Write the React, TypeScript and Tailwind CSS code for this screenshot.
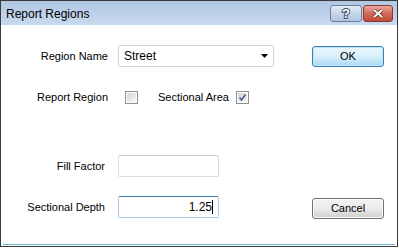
import React from 'react';

function Checkbox({ checked }: { checked?: boolean }) {
  return (
    <div className="w-[13px] h-[13px] border border-[#8f8f8f] bg-white p-[1px]">
      <div className="w-full h-full bg-gradient-to-br from-[#d6d6d6] to-[#f7f7f7] relative">
        {checked && (
          <svg className="absolute inset-0" width="9" height="9" viewBox="0 0 9 9">
            <path d="M1.5 4.5 L3.5 7 L7.5 1.5" stroke="#4a5c92" strokeWidth="1.6" fill="none" />
          </svg>
        )}
      </div>
    </div>
  );
}

function Button({ label, primary }: { label: string; primary?: boolean }) {
  return (
    <div
      className={
        'w-[72px] h-[21px] rounded-[3px] border flex items-center justify-center text-[11px] text-black ' +
        (primary
          ? 'border-[#3c7fb1] bg-gradient-to-b from-[#eaf6fd] via-[#d9f0fc] to-[#a7d9f5] shadow-[inset_0_0_0_1px_#c1e3f8]'
          : 'border-[#707070] bg-gradient-to-b from-[#f2f2f2] via-[#ebebeb] to-[#cfcfcf] shadow-[inset_0_0_0_1px_#fcfcfc]')
      }
    >
      {label}
    </div>
  );
}

export default function App() {
  return (
    <div
      className="w-[399px] h-[248px] bg-white overflow-hidden"
      style={{ fontFamily: '"Liberation Sans", Arial, sans-serif' }}
    >
      <div className="w-[398px] h-[247px] border border-[#3a3a3a] flex flex-col">
        {/* Title bar */}
        <div className="h-[24px] bg-gradient-to-b from-[#b1c7e2] to-[#c7d9ee] flex items-center pl-[5px] pr-[4px]">
          <span className="text-[12px] text-black mt-[2px]">Report Regions</span>
          <div className="ml-auto flex gap-[1px] mt-[1px]">
            <div className="w-[32px] h-[17px] rounded-[3px] border border-[#6d7f98] bg-gradient-to-b from-[#e3ebf5] via-[#c8d7ea] to-[#afc4e0] flex items-center justify-center">
              <span className="text-[13px] font-bold text-white leading-none [-webkit-text-stroke:2px_#3f5068] [paint-order:stroke_fill]">?</span>
            </div>
            <div className="w-[30px] h-[17px] rounded-[3px] border border-[#8a3a32] bg-gradient-to-b from-[#e9a99c] via-[#d1695a] to-[#c44a3a] flex items-center justify-center">
              <svg width="12" height="9" viewBox="0 0 12 9">
                <path d="M2 1 L10 8 M10 1 L2 8" stroke="#5a2019" strokeWidth="3.2" />
                <path d="M2 1 L10 8 M10 1 L2 8" stroke="#ffffff" strokeWidth="2" />
              </svg>
            </div>
          </div>
        </div>

        {/* Body */}
        <div className="flex-1 flex flex-col pt-[20px]">
          {/* Region name row */}
          <div className="flex items-center h-[22px]">
            <div className="w-[107px] text-right text-[11px] text-black">Region Name</div>
            <div className="ml-[10px] w-[156px] h-[22px] rounded-[2px] border border-[#d3d3d3] bg-white flex items-center pl-[5px] pr-[5px]">
              <span className="text-[12px] text-black">Street</span>
              <svg className="ml-auto" width="7" height="4" viewBox="0 0 7 4">
                <path d="M0 0 H7 L3.5 4 Z" fill="#000" />
              </svg>
            </div>
            <div className="ml-[38px]">
              <Button label="OK" primary />
            </div>
          </div>

          {/* Checkboxes row */}
          <div className="flex items-center h-[13px] mt-[24px]">
            <div className="w-[107px] text-right text-[11px] text-black">Report Region</div>
            <div className="ml-[17px]">
              <Checkbox />
            </div>
            <div className="ml-[20px] text-[11px] text-black">Sectional Area</div>
            <div className="ml-[7px]">
              <Checkbox checked />
            </div>
          </div>

          {/* Fill factor */}
          <div className="flex items-center h-[22px] mt-[51px]">
            <div className="w-[104px] text-right text-[11px] text-black">Fill Factor</div>
            <div className="ml-[13px] w-[101px] h-[22px] rounded-[2px] border border-[#dcdcdc] border-t-[#c8c8c8] bg-white" />
          </div>

          {/* Sectional depth */}
          <div className="flex items-center h-[22px] mt-[19px]">
            <div className="w-[104px] text-right text-[11px] text-black">Sectional Depth</div>
            <div className="ml-[13px] w-[101px] h-[22px] rounded-[2px] border border-[#a9c8e6] border-t-[#3d7bad] bg-white flex items-center justify-end pr-[5px]">
              <span className="text-[12px] text-black">1.25</span>
              <span className="w-[1px] h-[14px] bg-black" />
            </div>
            <div className="ml-[93px] mt-[3px]">
              <Button label="Cancel" />
            </div>
          </div>

          <div className="mt-auto mx-[2px] h-[1px] bg-[#6cb6dc]" />
          <div className="h-[1px]" />
        </div>
      </div>
    </div>
  );
}
